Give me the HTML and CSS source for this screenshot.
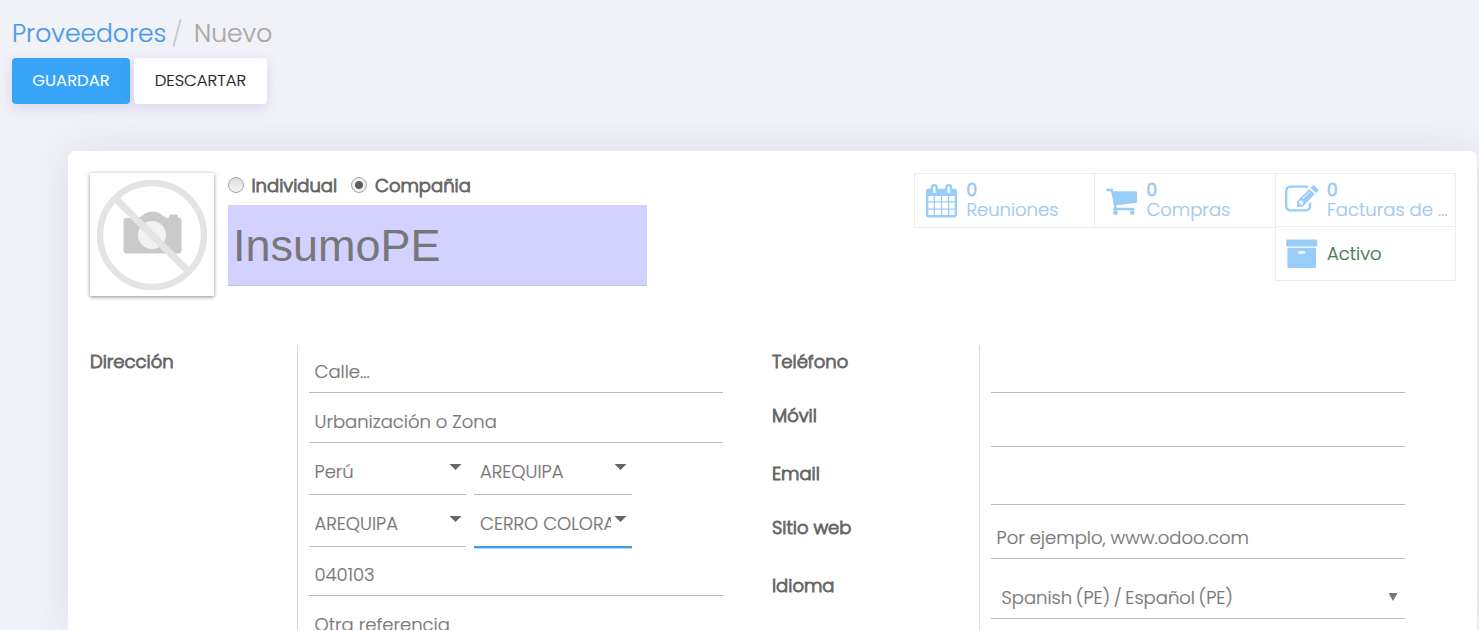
FILE: index.html
```html
<!DOCTYPE html>
<html lang="es">
<head>
<meta charset="utf-8">
<title>Proveedores / Nuevo</title>
<link rel="stylesheet" href="styles.css">
</head>
<body>
<header class="control-panel">
  <nav class="breadcrumb"><a class="crumb-link">Proveedores</a><svg class="crumb-sep" viewBox="0 0 10 28"><path d="M8.6 0.5L1.400 27.5" /></svg><span class="crumb-current">Nuevo</span></nav>
  <div class="actions">
    <button class="btn btn-primary">GUARDAR</button>
    <button class="btn btn-light">DESCARTAR</button>
  </div>
</header>
<main class="sheet">
  <section class="sheet-head">
    <div class="avatar">
      <svg viewBox="0 0 124 123">
        <path fill="#cacaca" d="M36 45h12q3-1 5-3 4-3.500 9.500-3.500t9.500 3.500q2 2 5 3h1q1 0 1-2 0-1.500 2-1.500h5q2 0 2 2 0 1.500 1.500 1.500 2 0 2 3v29.500q0 3-3 3h-52q-3 0-3-3v-29.500q0-3 2-3z"/>
        <circle cx="62" cy="62" r="14" fill="#f2f2f2"/>
        <circle cx="62" cy="62" r="52" fill="none" stroke="#e4e4e4" stroke-width="6.5"/>
        <path d="M26 26L98 98" stroke="#e4e4e4" stroke-width="7"/>
      </svg>
    </div>
    <div class="identity">
      <div class="radios">
        <span class="radio"></span><b class="radio-label individual">Individual</b>
        <span class="radio checked"></span><b class="radio-label company">Compañia</b>
      </div>
      <div class="name-field">InsumoPE</div>
    </div>
    <div class="stats">
      <div class="stat">
        <svg class="icon" viewBox="0 0 1792 1792"><path d="M128 1664h288v-288h-288v288zM480 1664h320v-288h-320v288zM128 1312h288v-320h-288v320zM480 1312h320v-320h-320v320zM128 928h288v-288h-288v288zM864 1664h320v-288h-320v288zM480 928h320v-288h-320v288zM1248 1664h288v-288h-288v288zM864 1312h320v-320h-320v320zM512 448v-288q0-13-9.500-22.500t-22.500-9.500h-64q-13 0-22.500 9.500t-9.500 22.500v288q0 13 9.500 22.500t22.500 9.500h64q13 0 22.500-9.500t9.500-22.500zM1248 1312h288v-320h-288v320zM864 928h320v-288h-320v288zM1248 928h288v-288h-288v288zM1280 448v-288q0-13-9.500-22.500t-22.500-9.500h-64q-13 0-22.500 9.500t-9.500 22.500v288q0 13 9.500 22.500t22.500 9.500h64q13 0 22.500-9.500t9.500-22.500zM1664 384v1280q0 52-38 90t-90 38h-1408q-52 0-90-38t-38-90v-1280q0-52 38-90t90-38h128v-96q0-66 47-113t113-47h64q66 0 113 47t47 113v96h384v-96q0-66 47-113t113-47h64q66 0 113 47t47 113v96h128q52 0 90 38t38 90z"/></svg>
        <div class="stat-text"><b>0</b><span class="meetings">Reuniones</span></div>
      </div>
      <div class="stat">
        <svg class="icon" viewBox="0 0 1792 1792"><path d="M640 1536q0 52-38 90t-90 38-90-38-38-90 38-90 90-38 90 38 38 90zM1536 1536q0 52-38 90t-90 38-90-38-38-90 38-90 90-38 90 38 38 90zM1664 448v512q0 24-16.500 42.500t-40.500 21.500l-1044 122q13 60 13 70 0 16-24 64h920q26 0 45 19t19 45-19 45-45 19h-1024q-26 0-45-19t-19-45q0-11 8-31.500t16-36 21.500-40 15.500-29.500l-177-823h-204q-26 0-45-19t-19-45 19-45 45-19h256q16 0 28.500 6.500t19.500 15.500 13 24.500 8 26 5.500 29.500 4.500 26h1201q26 0 45 19t19 45z"/></svg>
        <div class="stat-text"><b>0</b><span class="purchases">Compras</span></div>
      </div>
      <div class="stat-column">
        <div class="stat">
          <svg class="icon" viewBox="0 0 1792 1792"><path d="M888 1184l116-116-152-152-116 116v56h96v96h56zM1328 464q-16-16-33 1l-350 350q-17 17-1 33t33-1l350-350q17-17 1-33zM1408 1058v190q0 119-84.500 203.500t-203.500 84.500h-832q-119 0-203.500-84.500t-84.500-203.500v-832q0-119 84.500-203.500t203.500-84.500h832q63 0 117 25 15 7 18 23 3 17-9 29l-49 49q-14 14-32 8-23-6-45-6h-832q-66 0-113 47t-47 113v832q0 66 47 113t113 47h832q66 0 113-47t47-113v-126q0-13 9-22l64-64q15-15 35-7t20 29zM1312 320l288 288-672 672h-288v-288zM1756 452l-92 92-288-288 92-92q28-28 68-28t68 28l152 152q28 28 28 68t-28 68z"/></svg>
          <div class="stat-text"><b>0</b><span class="invoices">Facturas de ...</span></div>
        </div>
        <div class="stat stat-active">
          <svg class="icon" viewBox="0 0 1792 1792"><path d="M1088 832q0-26-19-45t-45-19h-256q-26 0-45 19t-19 45 19 45 45 19h256q26 0 45-19t19-45zM1664 640v960q0 26-19 45t-45 19h-1408q-26 0-45-19t-19-45v-960q0-26 19-45t45-19h1408q26 0 45 19t19 45zM1728 192v256q0 26-19 45t-45 19h-1536q-26 0-45-19t-19-45v-256q0-26 19-45t45-19h1536q26 0 45 19t19 45z"/></svg>
          <div class="stat-text"><span class="active-label">Activo</span></div>
        </div>
      </div>
    </div>
  </section>
  <section class="form">
    <div class="group">
      <div class="labels"><b class="address">Dirección</b></div>
      <div class="fields">
        <div class="field street">Calle...</div>
        <div class="field zone">Urbanización o Zona</div>
        <div class="pair">
          <div class="field select"><span>Perú</span><i class="caret"></i></div>
          <div class="field select"><span>AREQUIPA</span><i class="caret"></i></div>
        </div>
        <div class="pair">
          <div class="field select"><span>AREQUIPA</span><i class="caret"></i></div>
          <div class="field select focused"><span>CERRO COLORADO</span><i class="caret"></i></div>
        </div>
        <div class="field zip">040103</div>
        <div class="field reference">Otra referencia</div>
      </div>
    </div>
    <div class="group">
      <div class="labels">
        <b class="phone">Teléfono</b>
        <b class="mobile">Móvil</b>
        <b class="email">Email</b>
        <b class="website">Sitio web</b>
        <b class="language">Idioma</b>
      </div>
      <div class="fields">
        <div class="field field-phone"></div>
        <div class="field field-mobile"></div>
        <div class="field field-email"></div>
        <div class="field field-website">Por ejemplo, www.odoo.com</div>
        <div class="field field-language"><span>Spanish (PE) / Español (PE)</span><i class="arrow"></i></div>
      </div>
    </div>
  </section>
</main>
</body>
</html>
```
FILE: styles.css
```css
* { box-sizing: border-box; }
html, body { height: 100%; }
body {
  margin: 0;
  overflow: hidden;
  background: #f1f2f8;
  color: #666;
  font: 300 18px/27px Poppins, Inter, "Open Sans", sans-serif;
  -webkit-text-stroke: .2px;
  display: flex;
  flex-direction: column;
}
b { font-weight: 300; -webkit-text-stroke: .9px; }

.control-panel { padding: 14px 12px 0; height: 151px; flex: none; }
.breadcrumb { display: flex; align-items: center; height: 38px; padding-top: 1px; font-size: 25px; line-height: 38px; white-space: nowrap; }
.crumb-link { width: 154px; color: #4a9ae8; }
.crumb-sep { width: 10px; height: 28px; margin: -2px 12px 0 6px; fill: none; stroke: #ccc; stroke-width: 2; }
.crumb-current { color: #aaa7a5; }
.actions { display: flex; gap: 4px; margin-top: 6px; }
.btn {
  height: 46px;
  padding: 0 0 2px;
  border: 0;
  border-radius: 4px;
  font: inherit;
  font-size: 16.400px;
  font-weight: 400;
  -webkit-text-stroke: 0;
  box-shadow: 0 4px 14px rgba(90, 70, 190, .17);
}
.btn-primary { width: 118px; background: #38a4f8; color: #fff; }
.btn-light { width: 133px; background: #fff; color: #212529; font-size: 16.500px; font-weight: 300; -webkit-text-stroke: .2px; }

.sheet {
  flex: 1;
  min-height: 0;
  margin: 0 2px 0 68px;
  padding: 22px 21px 0 22px;
  background: #fff;
  border-radius: 7px 7px 0 0;
  box-shadow: 0 0 40px rgba(60, 60, 100, .11);
}
.sheet-head { display: flex; height: 172px; }
.avatar { width: 124px; height: 123px; background: #fff; box-shadow: 0 1px 4px rgba(0, 0, 0, .45); }
.avatar svg { display: block; filter: blur(.5px); }
.identity { width: 419px; margin-left: 14px; }
.radios { display: flex; align-items: center; height: 24px; }
.radio {
  width: 16px;
  height: 16px;
  border: 1px solid #a6a6a6;
  border-radius: 50%;
  background: linear-gradient(#dedede, #f4f4f4);
}
.radio.checked { background: radial-gradient(circle, #5d5d5d 0 3.500px, #eee 4.500px); }
.radio-label { margin-left: 7px; padding-top: 1px; white-space: nowrap; }
.individual { width: 100px; padding-left: .5px; }
.company { margin-left: 8px; }
.name-field {
  height: 81px;
  margin-top: 8px;
  padding: 0 5px;
  border-bottom: 1px solid #c3c3d0;
  background: #d2d1ff;
  color: #777;
  font: 45px/82px "Liberation Sans", Arial, sans-serif;
  -webkit-text-stroke: 0;
}

.stats { display: flex; align-items: flex-start; height: 55px; margin-left: auto; border-left: 1px solid #ededed; color: #9ec9f0; }
.stat {
  display: flex;
  align-items: center;
  width: 180px;
  height: 55px;
  padding-left: 11px;
  border: solid #ededed;
  border-width: 1px 1px 1px 0;
}
.stat + .stat { width: 181px; }
.stat-column { width: 181px; margin-left: -1px; }
.stat-column .stat { width: 181px; height: 54px; padding-left: 9px; border-left: 1px solid #ededed; }
.stat-column .stat-active { border-top: 0; }
.icon { width: 33.400px; height: 33.400px; margin-right: 7px; fill: #99cdf9; overflow: visible; }
.stat-column .icon { margin-right: 8.500px; }
.stat-text { display: flex; flex-direction: column; font-size: 18px; line-height: 20px; white-space: nowrap; }
.stat-text b { height: 20px; margin-top: -1px; font-size: 17px; }
.active-label { color: #44774b; }

.form { display: flex; height: 285px; overflow: hidden; }
.group { display: flex; width: 682px; flex: none; }
.labels { display: flex; flex-direction: column; width: 207px; padding-top: 3px; white-space: nowrap; }
.fields { width: 426px; padding-left: 11px; border-left: 1px solid #d8d8d8; }
.field { height: 50px; padding: 8px 5.500px 0; border-bottom: 1px solid #bbb; color: #777; white-space: nowrap; }
.street { height: 48px; padding-top: 13px; }
.zone { padding-top: 15px; }
.pair { display: flex; gap: 8px; height: 52px; }
.select { display: flex; justify-content: space-between; width: 157px; height: 52px; padding: 15px 4.500px 0 5.500px; }
.select + .select { width: 158px; padding-right: 5.500px; padding-left: 6px; }
.select span { overflow: hidden; width: 131px; }
.select.focused { height: 53px; border-bottom: 2px solid #429de8; box-shadow: 0 1px #b5d8f7; }
.caret { width: 12px; height: 6px; margin-top: 6px; flex: none; background: #666; clip-path: polygon(0 0, 100% 0, 50% 100%); }
.zip { height: 49px; padding-top: 14px; }
.reference { padding-top: 15px; }

.phone { height: 54px; }
.mobile { height: 58px; }
.email { height: 54px; }
.website { height: 58px; }
.field-phone { height: 48px; }
.field-mobile { height: 54px; }
.field-email { height: 58px; }
.field-website { height: 54px; padding-top: 19px; }
.field-language { display: flex; justify-content: space-between; height: 60px; padding: 25px 7.500px 0 10.500px; word-spacing: -1.300px; }
.arrow { width: 9px; height: 8px; margin-top: 9px; background: #777; clip-path: polygon(0 0, 100% 0, 50% 100%); }
```
